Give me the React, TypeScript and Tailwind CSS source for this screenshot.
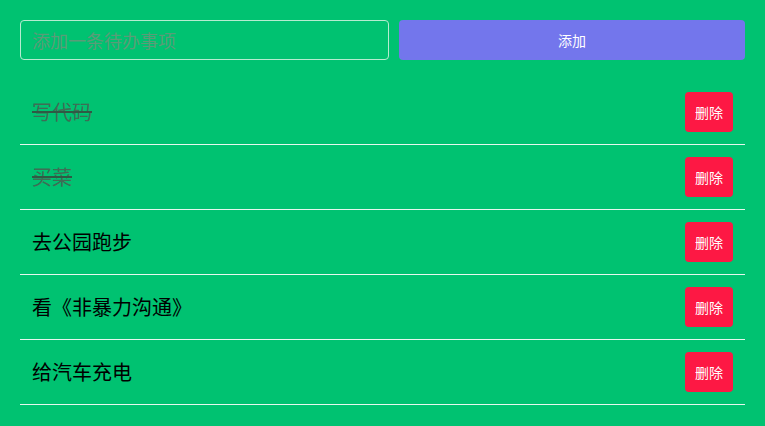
import { useState } from 'react';

type Todo = { id: number; text: string; done: boolean };

const initial: Todo[] = [
  { id: 1, text: '写代码', done: true },
  { id: 2, text: '买菜', done: true },
  { id: 3, text: '去公园跑步', done: false },
  { id: 4, text: '看《非暴力沟通》', done: false },
  { id: 5, text: '给汽车充电', done: false },
];

export default function App() {
  const [todos, setTodos] = useState<Todo[]>(initial);
  const [value, setValue] = useState('');

  const add = () => {
    if (!value.trim()) return;
    setTodos([...todos, { id: Date.now(), text: value.trim(), done: false }]);
    setValue('');
  };

  return (
    <div
      className="min-h-screen bg-[#00c271] p-5"
      style={{ fontFamily: '"Noto Sans CJK SC", "Noto Sans", sans-serif' }}
    >
      <div className="flex gap-[10px]">
        <input
          value={value}
          onChange={(e) => setValue(e.target.value)}
          placeholder="添加一条待办事项"
          className="h-10 w-[369px] rounded-[4px] border border-[#b5ecd0] bg-transparent px-[11px] text-[18px] text-black placeholder:text-[#5a9c78] focus:outline-none"
        />
        <button
          onClick={add}
          className="h-10 flex-1 rounded-[4px] bg-[#7376ec] text-[14px] text-white"
        >
          添加
        </button>
      </div>

      <ul className="mt-5">
        {todos.map((t) => (
          <li
            key={t.id}
            className="flex h-[65px] items-center justify-between border-b border-[#e6f7ee] px-3"
          >
            <span
              onClick={() =>
                setTodos(todos.map((x) => (x.id === t.id ? { ...x, done: !x.done } : x)))
              }
              className={
                t.done
                  ? 'text-[20px] text-[#3f6d55] line-through decoration-[#2f5a44] decoration-2'
                  : 'text-[20px] text-black'
              }
            >
              {t.text}
            </span>
            <button
              onClick={() => setTodos(todos.filter((x) => x.id !== t.id))}
              className="h-10 w-12 rounded-[4px] bg-[#fd1844] text-[14px] text-white"
            >
              删除
            </button>
          </li>
        ))}
      </ul>
    </div>
  );
}
